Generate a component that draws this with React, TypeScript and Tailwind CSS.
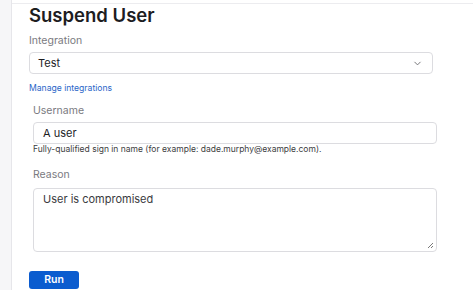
import { ChevronDown } from 'lucide-react';

export default function App() {
  return (
    <div className="w-[473px] h-[295px] bg-white flex overflow-hidden" style={{ fontFamily: 'Inter, "Liberation Sans", sans-serif' }}>
      <div className="w-[12px] h-[290px] bg-[#f6f6f8] border-r border-[#e6e6ea] shrink-0" />
      <div className="flex-1 mt-[3px] border-t border-[#ececef]">
        <div className="pl-[17px] pr-[40px]">
          <h1 className="text-[18.5px] leading-[22px] font-semibold text-[#1d1d1f]">Suspend User</h1>

          <label className="block text-[10.5px] leading-[14px] text-[#7a7a80] mt-[8px]">Integration</label>
          <div className="mt-[4px] h-[22px] border border-[#dcdce0] rounded-[4px] flex items-center justify-between pl-[8px] pr-[9px]">
            <span className="text-[11px] text-[#1d1d1f]">Test</span>
            <ChevronDown className="w-[11px] h-[11px] text-[#6b6b70]" strokeWidth={2} />
          </div>
          <a className="block text-[8.6px] leading-[12px] text-[#2a66c8] mt-[8px]">Manage integrations</a>
        </div>

        <div className="pl-[21px] pr-[36px] mt-[10px]">
          <label className="block text-[10.5px] leading-[14px] text-[#7a7a80]">Username</label>
          <div className="mt-[4px] h-[22px] border border-[#dcdce0] rounded-[4px] flex items-center pl-[9px]">
            <span className="text-[11px] text-[#1d1d1f]">A user</span>
          </div>
          <p className="text-[8.5px] leading-[10px] text-[#3c3c40]">Fully-qualified sign in name (for example: dade.murphy@example.com).</p>

          <label className="block text-[10.5px] leading-[14px] text-[#7a7a80] mt-[14px]">Reason</label>
          <div className="relative mt-[6px] h-[64px] border border-[#dcdce0] rounded-[4px] pl-[9px] pt-[3px]">
            <span className="block text-[11px] leading-[14px] text-[#3a3a3e]">User is compromised</span>
            <svg className="absolute right-[2px] bottom-[2px]" width="7" height="7" viewBox="0 0 7 7">
              <path d="M6 1L1 6M6 4L4 6" stroke="#7a7a7a" strokeWidth="1" />
            </svg>
          </div>
        </div>

        <div className="pl-[17px] mt-[19px]">
          <button className="block w-[50px] h-[18px] bg-[#0b5ccf] rounded-[3px] text-white text-[10.5px] font-semibold leading-[18px]">Run</button>
        </div>
      </div>
    </div>
  );
}
